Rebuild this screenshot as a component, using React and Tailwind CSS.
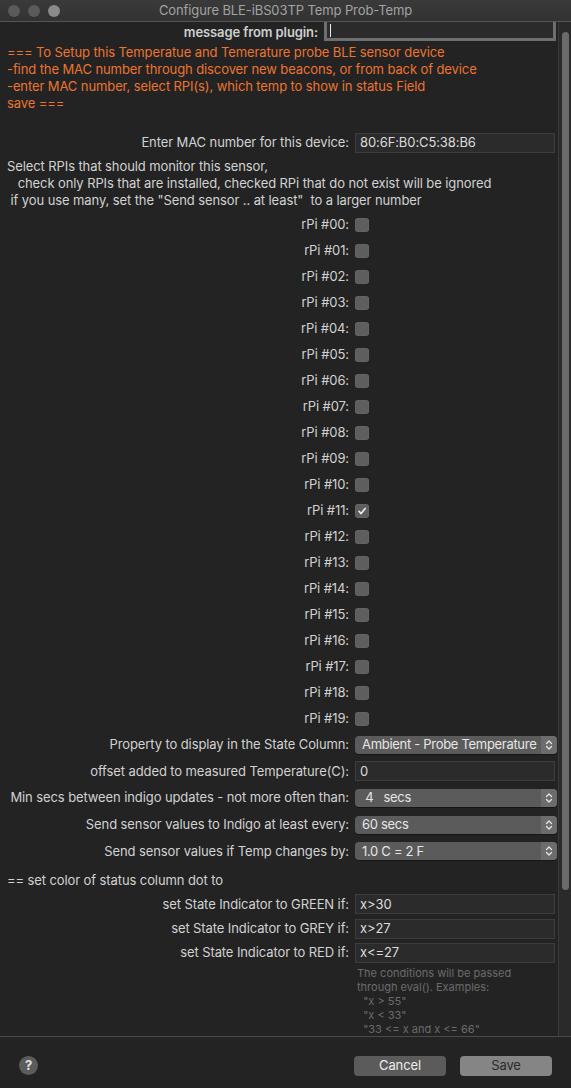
import React from "react";

const labelCls = "w-[349px] shrink-0 text-right text-[13px] text-[#d2d2d2] whitespace-pre";

function TextField({ value }) {
  return (
    <div className="w-[200px] h-[20px] bg-[#2b2b2b] border border-[#3d3d3d] flex items-center pl-[4px] text-[13px] text-[#dcdcdc]">
      {value}
    </div>
  );
}

function Popup({ value }) {
  return (
    <div className="w-[202px] h-[18px] rounded-[4px] bg-[#5b5b5b] flex items-stretch overflow-hidden shadow-[0_1px_0_rgba(0,0,0,0.35)]">
      <div className="flex-1 flex items-center pl-[7px] text-[13px] tracking-[-0.3px] text-[#e6e6e6] whitespace-pre overflow-hidden">{value}</div>
      <div className="w-[16px] shrink-0 bg-[#6c6c6c] flex items-center justify-center">
        <svg width="8" height="12" viewBox="0 0 8 12" fill="none" stroke="#e6e6e6" strokeWidth="1.3" strokeLinecap="round" strokeLinejoin="round">
          <path d="M1.5 4.5 L4 2 L6.5 4.5" />
          <path d="M1.5 7.5 L4 10 L6.5 7.5" />
        </svg>
      </div>
    </div>
  );
}

function Checkbox({ checked }) {
  return (
    <div className="w-[14px] h-[14px] rounded-[3px] bg-[#5e5e5e] flex items-center justify-center shadow-[inset_0_0_0_0.5px_rgba(255,255,255,0.08)]">
      {checked && (
        <svg width="10" height="10" viewBox="0 0 10 10" fill="none" stroke="#ececec" strokeWidth="1.6" strokeLinecap="round" strokeLinejoin="round">
          <path d="M2 5.3 L4.1 7.6 L8.2 2.4" />
        </svg>
      )}
    </div>
  );
}

function Row({ label, h = "h-[26px]", children }) {
  return (
    <div className={`flex items-center ${h}`}>
      <div className={labelCls}>{label}</div>
      <div className="ml-[6px]">{children}</div>
    </div>
  );
}

export default function App() {
  const rpis = Array.from({ length: 20 }, (_, i) => i);
  return (
    <div className="w-[571px] h-[1088px] bg-[#232323] flex flex-col overflow-hidden tracking-[-0.1px] font-['Inter','Liberation_Sans',Arial,sans-serif]">
      {/* Title bar */}
      <div className="h-[22px] shrink-0 bg-gradient-to-b from-[#3a3a3a] to-[#323232] border-b border-[#555555] flex items-center relative">
        <div className="flex items-center gap-[8px] pl-[8px]">
          <div className="w-[12px] h-[12px] rounded-full bg-[#5a5a5a]" />
          <div className="w-[12px] h-[12px] rounded-full bg-[#5a5a5a]" />
          <div className="w-[12px] h-[12px] rounded-full bg-[#8a8a8a]" />
        </div>
        <div className="flex-1 text-center text-[13px] text-[#a3a3a3] pr-[60px]">Configure BLE-iBS03TP Temp Prob-Temp</div>
      </div>

      {/* Content */}
      <div className="h-[1014px] shrink-0 flex overflow-hidden">
        <div className="flex-1 flex flex-col overflow-hidden">
          {/* message from plugin */}
          <div className="flex items-start justify-end h-[19px] pr-[2px]">
            <div className="text-[13px] font-semibold text-[#cfcfcf] mr-[6px] mt-[1px]">message from plugin:</div>
            <div className="w-[232px] h-[19px] bg-[#2b2b2b] border-[3px] border-t-0 border-[#6e6e6e] relative">
              <div className="absolute left-[3px] top-[2px] w-[1px] h-[13px] bg-[#f0f0f0]" />
            </div>
          </div>

          {/* Orange text */}
          <div className="mt-[3px] pl-[7px] text-[13px] leading-[17px] text-[#ec7430]">
            <div>=== To Setup this Temperatue and Temerature probe BLE sensor device</div>
            <div>-find the MAC number through discover new beacons, or from back of device</div>
            <div>-enter MAC number, select RPI(s), which temp to show in status Field</div>
            <div>save ===</div>
          </div>

          {/* MAC */}
          <div className="mt-[21px]">
            <div className="flex items-center h-[20px]">
              <div className={labelCls}>Enter MAC number for this device:</div>
              <div className="ml-[6px]"><TextField value="80:6F:B0:C5:38:B6" /></div>
            </div>
          </div>

          {/* Gray text */}
          <div className="mt-[5px] pl-[7px] text-[13px] leading-[17px] text-[#d2d2d2] whitespace-pre">
            <div>Select RPIs that should monitor this sensor,</div>
            <div>{"   check only RPIs that are installed, checked RPi that do not exist will be ignored"}</div>
            <div>{" if you use many, set the \"Send sensor .. at least\"  to a larger number"}</div>
          </div>

          {/* rPi rows */}
          <div className="mt-[3px] flex flex-col">
            {rpis.map((i) => (
              <Row key={i} label={`rPi #${String(i).padStart(2, "0")}:`} h="h-[26px]">
                <Checkbox checked={i === 11} />
              </Row>
            ))}
          </div>

          {/* Settings */}
          <Row label="Property to display in the State Column:" h="h-[27px]">
            <Popup value="Ambient - Probe Temperature" />
          </Row>
          <Row label="offset added to measured Temperature(C):" h="h-[27px]">
            <TextField value="0" />
          </Row>
          <Row label="Min secs between indigo updates - not more often than:" h="h-[28px]">
            <Popup value=" 4   secs" />
          </Row>
          <Row label="Send sensor values to Indigo at least every:" h="h-[27px]">
            <Popup value="60 secs" />
          </Row>
          <Row label="Send sensor values if Temp changes by:" h="h-[28px]">
            <Popup value="1.0 C = 2 F" />
          </Row>

          <div className="h-[28px] flex items-center pt-[5px] pl-[7px] text-[13px] text-[#d2d2d2]">
            == set color of status column dot to
          </div>

          <Row label="set State Indicator to GREEN if:" h="h-[25px]">
            <TextField value="x>30" />
          </Row>
          <Row label="set State Indicator to GREY if:" h="h-[25px]">
            <TextField value="x>27" />
          </Row>
          <Row label="set State Indicator to RED if:" h="h-[25px]">
            <TextField value="x<=27" />
          </Row>

          <div className="mt-[1px] pl-[357px] text-[11px] leading-[14px] tracking-normal text-[#6b6b6b] whitespace-pre">
            <div>The conditions will be passed</div>
            <div>through eval(). Examples:</div>
            <div>{"  \"x > 55\""}</div>
            <div>{"  \"x < 33\""}</div>
            <div>{"  \"33 <= x and x <= 66\""}</div>
          </div>
        </div>

        {/* Scrollbar */}
        <div className="w-[13px] shrink-0 bg-[#2a2a2a] border-l border-[#3a3a3a] pt-[10px] pl-[3px]">
          <div className="w-[7px] h-[858px] rounded-full bg-[#6b6b6b]" />
        </div>
      </div>

      {/* Bottom bar */}
      <div className="flex-1 border-t border-[#4a4a4a] bg-[#232323] flex items-center px-[19px]">
        <div className="w-[19px] h-[19px] rounded-full bg-[#5c5c5c] flex items-center justify-center text-[13px] font-bold text-[#e0e0e0] mt-[6px]">?</div>
        <div className="flex-1" />
        <div className="flex gap-[14px] mt-[7px]">
          <div className="w-[92px] h-[20px] rounded-[4px] bg-[#5b5b5b] flex items-center justify-center text-[13px] text-[#ececec]">Cancel</div>
          <div className="w-[92px] h-[20px] rounded-[4px] bg-[#858585] flex items-center justify-center text-[13px] text-[#2b2b2b]">Save</div>
        </div>
      </div>
    </div>
  );
}
